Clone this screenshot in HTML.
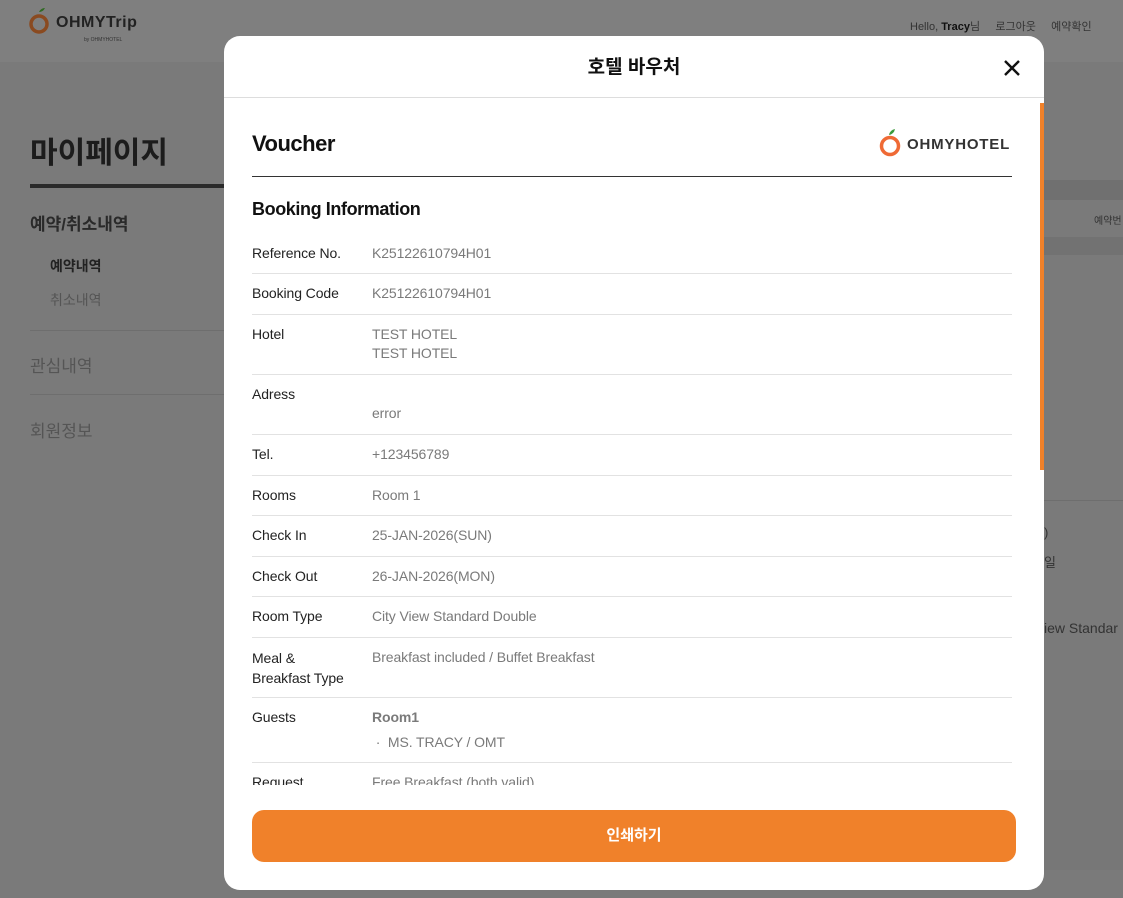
<!DOCTYPE html>
<html><head><meta charset="utf-8"><style>
*{margin:0;padding:0;box-sizing:border-box}
body{width:1123px;height:898px;overflow:hidden;background:#7a7a7a;font-family:"Liberation Sans","Noto Sans CJK KR",sans-serif;position:relative}
.abs{position:absolute}
.hdr{left:0;top:0;width:1123px;height:62px;background:#7f7f7f}
.side{color:#1c1c1c}
.modal{left:224px;top:36px;width:820px;height:854px;background:#fff;border-radius:16px;overflow:hidden}
.mh{height:62px;border-bottom:1px solid #ddd;text-align:center;line-height:64px;font-size:19px;font-weight:bold;color:#111;position:relative}
.close{position:absolute;right:22px;top:22px}
.body{position:absolute;left:28px;top:63px;width:760px;height:686px;overflow:hidden}
.row{display:flex;border-bottom:1px solid #e2e2e2;padding:10px 0 0;font-size:14px;line-height:19px;letter-spacing:-0.1px;overflow:hidden}
.lab{width:120px;color:#222}
.val{color:#7a7a7a}
.btn{left:28px;top:774px;width:764px;height:52px;background:#f0812a;border-radius:12px;color:#fff;font-weight:bold;font-size:15px;text-align:center;line-height:52px}
</style></head><body>
<div class="abs hdr"></div>
<svg class="abs" style="left:28px;top:6px" width="22" height="30" viewBox="0 0 22 30"><path d="M11 6 q2-4 6-4 q-2 4-6 4z" fill="#2f6a22"/><circle cx="11" cy="18" r="8" fill="none" stroke="#8a4a20" stroke-width="3.5"/></svg>
<div class="abs" style="left:56px;top:14px;font-size:16px;font-weight:bold;color:#222;letter-spacing:0.5px">OHMYTrip</div>
<div class="abs" style="left:84px;top:37px;font-size:5px;color:#333">by OHMYHOTEL</div>
<div class="abs" style="left:910px;top:18px;font-size:11px;color:#333">Hello, <b style="color:#111">Tracy</b>님 &nbsp;&nbsp;&nbsp;&nbsp;로그아웃 &nbsp;&nbsp;&nbsp;&nbsp;예약확인</div>
<div class="abs side" style="left:30px;top:128px;font-size:30px;font-weight:bold">마이페이지</div>
<div class="abs" style="left:30px;top:184px;width:200px;height:4px;background:#2a2a2a"></div>
<div class="abs" style="left:30px;top:210px;font-size:17px;font-weight:bold;color:#2a2a2a">예약/취소내역</div>
<div class="abs" style="left:50px;top:256px;font-size:14px;font-weight:bold;color:#222">예약내역</div>
<div class="abs" style="left:50px;top:290px;font-size:14px;color:#555">취소내역</div>
<div class="abs" style="left:30px;top:330px;width:200px;height:1px;background:#6e6e6e"></div>
<div class="abs" style="left:30px;top:352px;font-size:17px;color:#555">관심내역</div>
<div class="abs" style="left:30px;top:394px;width:200px;height:1px;background:#6e6e6e"></div>
<div class="abs" style="left:30px;top:417px;font-size:17px;color:#555">회원정보</div>
<div class="abs" style="left:1044px;top:180px;width:79px;height:20px;background:#707070"></div>
<div class="abs" style="left:1044px;top:237px;width:79px;height:18px;background:#727272"></div>
<div class="abs" style="left:1094px;top:212px;font-size:10px;color:#333">예약번</div>
<div class="abs" style="left:1044px;top:500px;width:79px;height:1px;background:#6e6e6e"></div>
<div class="abs" style="left:1044px;top:525px;font-size:13px;color:#333">)</div>
<div class="abs" style="left:1044px;top:552px;font-size:13px;color:#333">일</div>
<div class="abs" style="left:1044px;top:620px;font-size:14px;color:#333">iew Standar</div>
<div class="abs" style="left:1044px;top:770px;width:79px;height:100px;background:#777"></div>
<div class="abs modal">
 <div class="mh">호텔 바우처
  <svg class="close" width="20" height="20" viewBox="0 0 20 20"><path d="M3 3L17 17M17 3L3 17" stroke="#111" stroke-width="2.4"/></svg>
 </div>
 <div class="abs" style="left:816px;top:67px;width:4px;height:367px;background:#f0812a"></div>
 <div class="body">
  <div style="height:78px;border-bottom:1px solid #333;position:relative">
   <div class="abs" style="left:0;top:32px;font-size:22px;font-weight:bold;color:#111;letter-spacing:-0.5px">Voucher</div>
   <svg class="abs" style="left:626px;top:26px" width="26" height="34" viewBox="0 0 26 34"><path d="M11 10 q1-5 6-6 q-1 5-6 6z" fill="#3a9a3a"/><circle cx="12" cy="21" r="8.5" fill="none" stroke="#ef6a35" stroke-width="3.5"/></svg>
   <div class="abs" style="left:655px;top:37px;font-size:15px;font-weight:bold;color:#333;letter-spacing:0.8px">OHMYHOTEL</div>
  </div>
  <div style="font-size:18px;font-weight:bold;color:#111;margin-top:22px;height:35px;letter-spacing:-0.4px">Booking Information</div>
  <div class="row" style="height:40px;padding-top:10px"><div class="lab">Reference No.</div><div class="val">K25122610794H01</div></div>
  <div class="row" style="height:41px"><div class="lab">Booking Code</div><div class="val">K25122610794H01</div></div>
  <div class="row" style="height:60px"><div class="lab">Hotel</div><div class="val">TEST HOTEL<br>TEST HOTEL</div></div>
  <div class="row" style="height:60px"><div class="lab">Adress</div><div class="val"><br>error</div></div>
  <div class="row" style="height:41px"><div class="lab">Tel.</div><div class="val">+123456789</div></div>
  <div class="row" style="height:40px"><div class="lab">Rooms</div><div class="val">Room 1</div></div>
  <div class="row" style="height:41px"><div class="lab">Check In</div><div class="val">25-JAN-2026(SUN)</div></div>
  <div class="row" style="height:40px"><div class="lab">Check Out</div><div class="val">26-JAN-2026(MON)</div></div>
  <div class="row" style="height:41px"><div class="lab">Room Type</div><div class="val">City View Standard Double</div></div>
  <div class="row" style="height:60px"><div class="lab" style="line-height:20px">Meal &amp;<br>Breakfast Type</div><div class="val">Breakfast included / Buffet Breakfast</div></div>
  <div class="row" style="height:65px"><div class="lab">Guests</div><div class="val"><b>Room1</b><div style="margin-top:6px">&nbsp;· &nbsp;MS. TRACY / OMT</div></div></div>
  <div class="row" style="border:0;height:40px"><div class="lab">Request</div><div class="val">Free Breakfast (both valid)</div></div>
 </div>
 <div class="abs btn">인쇄하기</div>
</div>
</body></html>
